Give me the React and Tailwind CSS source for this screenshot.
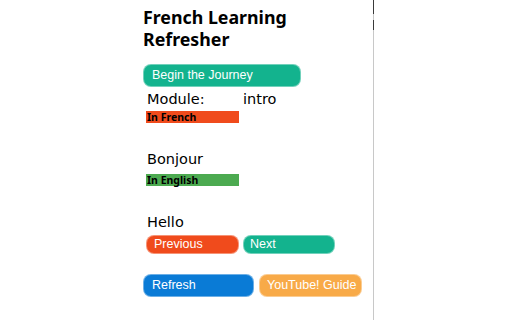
import React from 'react';

const btn =
  "flex items-center rounded-lg border border-white/40 text-white font-['Liberation_Sans',Arial,sans-serif] text-[12.5px] leading-none";

const App = () => {
  return (
    <div className="relative h-[320px] w-[512px] overflow-hidden bg-white font-['DejaVu_Sans',sans-serif] text-black">
      {/* side divider */}
      <div className="absolute left-[373px] top-0 h-full w-px bg-[#c8c8c8]">
        <div className="h-[14px] w-px bg-[#3a3a3a]" />
        <div className="mt-[6px] h-[10px] w-px bg-[#3a3a3a]" />
      </div>

      <div className="flex w-[373px] flex-col items-start pl-[143px] pt-[6px]">
        <h1 className="font-['Noto_Sans',sans-serif] text-[17.8px] font-bold leading-[22px]">
          French Learning
          <br />
          Refresher
        </h1>

        <button className={`${btn} mt-[14px] h-[23px] w-[158px] bg-[#13b38e] pl-[8px]`}>
          Begin the Journey
        </button>

        <div className="ml-[4px] mt-[3px] flex text-[14.5px] leading-[18px]">
          <span className="w-[96px]">Module:</span>
          <span>intro</span>
        </div>

        <div className="ml-[3px] mt-[3px] flex h-[12px] w-[93px] items-center bg-[#f04b1c] px-px font-['Noto_Sans',sans-serif] text-[10.5px] font-bold leading-none">
          In French
        </div>

        <div className="ml-[4px] mt-[27px] text-[14.5px] leading-[18px]">Bonjour</div>

        <div className="ml-[3px] mt-[6px] flex h-[12px] w-[93px] items-center bg-[#4caa50] px-px font-['Noto_Sans',sans-serif] text-[10.5px] font-bold leading-none">
          In English
        </div>

        <div className="ml-[4px] mt-[27px] text-[14.5px] leading-[18px]">Hello</div>

        <div className="ml-[3px] mt-[4px] flex gap-[4px]">
          <button className={`${btn} h-[19px] w-[93px] bg-[#f04b1c] pl-[7px]`}>Previous</button>
          <button className={`${btn} h-[19px] w-[92px] bg-[#13b38e] pl-[6px]`}>Next</button>
        </div>

        <div className="mt-[20px] flex gap-[5px]">
          <button className={`${btn} h-[23px] w-[111px] bg-[#0a7bd6] pl-[8px]`}>Refresh</button>
          <button className={`${btn} h-[23px] w-[103px] bg-[#f8aa48] pl-[7px]`}>YouTube! Guide</button>
        </div>
      </div>
    </div>
  );
};

export default App;
